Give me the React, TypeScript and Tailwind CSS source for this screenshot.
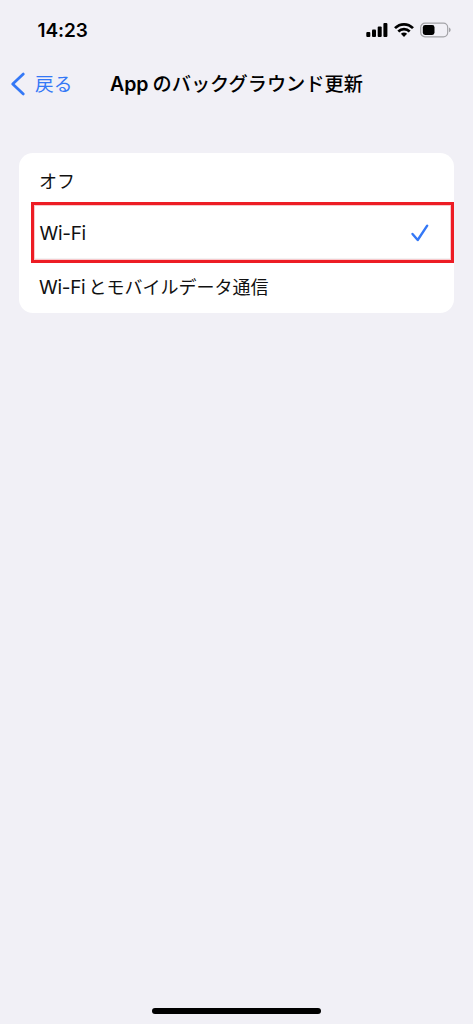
import type { ReactNode } from "react";

function Latin({ children, className = "" }: { children: ReactNode; className?: string }) {
  return <span className={`font-['Inter','Noto_Sans_CJK_JP',sans-serif] ${className}`}>{children}</span>;
}

function StatusBar() {
  return (
    <header className="flex h-[60px] items-center justify-between pl-[37.5px] pr-[21px]">
      <Latin className="pt-[2px] text-[19px] leading-6 font-semibold tracking-[-0.1px]">14:23</Latin>
      <div className="flex items-center">
        <svg width="22" height="16" viewBox="0 0 22 16" fill="black" aria-hidden="true">
          <rect x="0.3" y="10" width="4" height="5" rx="1" />
          <rect x="6" y="7.6" width="4" height="7.4" rx="1" />
          <rect x="11.7" y="4.6" width="4" height="10.4" rx="1" />
          <rect x="17.4" y="1" width="4" height="14" rx="1" />
        </svg>
        <svg className="ml-[6px]" width="20" height="16" viewBox="0 0 20 16" aria-hidden="true">
          <g fill="none" stroke="black" strokeWidth="2.7">
            <path d="M1 6.1C6.1 1 13.9 1 19 6.1" />
            <path d="M4.3 9.5C7.5 6.4 12.5 6.4 15.7 9.5" />
          </g>
          <path d="M6.9 11.8Q10 9.3 13.1 11.8L10 14.9Z" fill="black" />
        </svg>
        <svg className="ml-[6px]" width="32" height="16" viewBox="0 0 32 16" aria-hidden="true">
          <rect x="0.7" y="1.2" width="27" height="13.6" rx="4.3" fill="none" stroke="#a3a3a7" strokeWidth="1.2" />
          <rect x="2.8" y="3.1" width="11.7" height="9.8" rx="2.3" fill="black" />
          <path d="M29 5.6C31.2 6.4 31.2 9.5 29 10.3Z" fill="#a3a3a7" />
        </svg>
      </div>
    </header>
  );
}

function NavigationBar() {
  return (
    <nav className="flex h-[48px] items-center pl-[10px]">
      <button className="flex w-[100px] items-center text-[#3478f6]">
        <svg width="16" height="24" viewBox="0 0 16 24" fill="none" stroke="currentColor" strokeWidth="2.8" strokeLinecap="round" strokeLinejoin="round" aria-hidden="true">
          <path d="M13.3 2.1L2.7 12L13.3 21.9" />
        </svg>
        <span className="ml-[9px] pb-[2px] text-[18.7px] leading-6">戻る</span>
      </button>
      <h1 className="flex items-center text-[19.2px] leading-6 font-medium whitespace-nowrap">
        <Latin className="text-[19.5px] font-semibold">App</Latin>
        <span className="ml-[4px] pb-[2px]">のバックグラウンド更新</span>
      </h1>
    </nav>
  );
}

function App() {
  return (
    <div className="flex h-[1024px] w-[473px] flex-col bg-[#f1f0f6] font-['Noto_Sans_CJK_JP',sans-serif] text-black">
      <StatusBar />
      <NavigationBar />
      <main className="flex-1 pt-[45px] pr-[19px] pl-[19px]">
        <ul className="flex h-[160px] flex-col rounded-[14px] bg-white text-[18px] text-[#111]">
          <li className="flex h-[49px] items-center pt-[5px] pl-[20px]">オフ</li>
          <li className="ml-[12px] flex h-[61px] items-center justify-between border-[3px] border-[#ed1c24] pr-[21px] pl-[5.5px] shadow-[inset_0_0_0_1px_#f8c9cc,inset_0_-1px_0_1px_#f2f2f3]">
            <Latin className="pt-[4px] text-[19px] tracking-[-0.3px]">Wi-Fi</Latin>
            <svg className="mt-[1px]" width="20" height="20" viewBox="0 0 20 20" fill="none" stroke="#3478f6" strokeWidth="2.4" strokeLinecap="round" strokeLinejoin="round" aria-hidden="true">
              <path d="M2.5 11L7.7 17L17.2 2.7" />
            </svg>
          </li>
          <li className="flex h-[50px] items-center pb-[2px] pl-[20px]">
            <Latin className="pt-[2px] text-[19px] tracking-[-0.3px]">Wi-Fi</Latin>
            <span className="ml-[3px] pb-[1px]">とモバイルデータ通信</span>
          </li>
        </ul>
      </main>
      <footer className="flex h-[17px] justify-center pt-[1px]">
        <div className="h-[6px] w-[169px] rounded-full bg-black" />
      </footer>
    </div>
  );
}

export default App;
